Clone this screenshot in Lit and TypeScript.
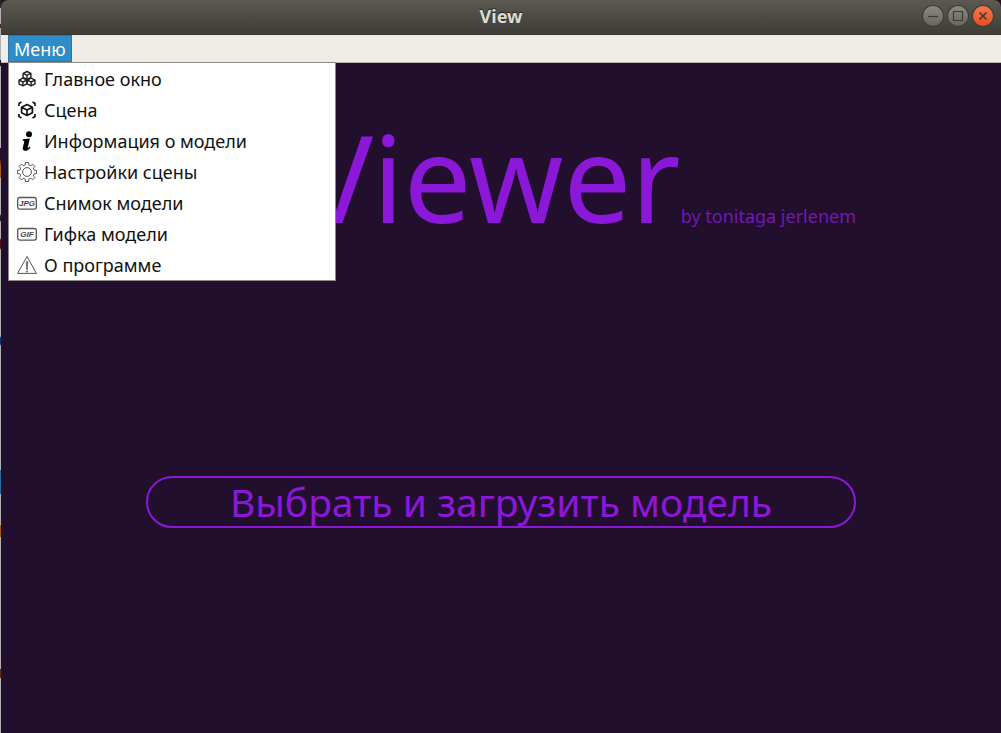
import { LitElement, html, svg, css, nothing } from "lit";
import { customElement, state } from "lit/decorators.js";

const cube = (x: number, y: number, r: number) => {
  const h = r / 2;
  return svg`<path d="M${x} ${y - r}L${x + r} ${y - h}V${y + h}L${x} ${y + r}L${x - r} ${y + h}V${y - h}ZM${x - r} ${y - h}L${x} ${y}L${x + r} ${y - h}M${x} ${y}V${y + r}"/>`;
};

const badge = (label: string) => svg`
  <rect x="0.7" y="4.5" width="18.6" height="11.6" rx="2" stroke="#555" stroke-width="1.3"/>
  <text x="10" y="13" text-anchor="middle" class="badge">${label}</text>`;

const gear = () => {
  const points: string[] = [];
  for (let i = 0; i < 8; i++) {
    const steps: [number, number][] = [[-13, 7.4], [-10, 9.7], [10, 9.7], [13, 7.4]];
    for (const [offset, radius] of steps) {
      const angle = ((i * 45 + offset) * Math.PI) / 180;
      points.push(`${(10 + radius * Math.sin(angle)).toFixed(2)},${(10 - radius * Math.cos(angle)).toFixed(2)}`);
    }
  }
  return svg`<polygon points=${points.join(" ")} stroke="#555" stroke-width="1" stroke-linejoin="round"/>
    <circle cx="10" cy="10" r="4.4" stroke="#555" stroke-width="1"/>`;
};

const items = [
  { label: "Главное окно", icon: svg`<g stroke="#222" stroke-width="1.4" stroke-linejoin="round">${cube(10, 6.4, 3.9)}${cube(5.9, 13, 3.9)}${cube(14.1, 13, 3.9)}</g>` },
  { label: "Сцена", icon: svg`<g stroke="#111" stroke-width="1.7" stroke-linejoin="round">${cube(10, 10, 5.4)}<path d="M2 6V3.5L4.5 2M15.5 2L18 3.5V6M18 14V16.5L15.5 18M4.5 18L2 16.5V14"/></g>` },
  { label: "Информация о модели", icon: svg`<circle cx="12" cy="3.2" r="3" fill="#000"/><path fill="#000" d="M5.6 9.4L6 8.2L12.9 7.4L10.9 15.6Q10.7 17 11.4 16.8L13 15.6L13.4 16.4Q11.2 19.8 8 19.8Q5.2 19.6 5.8 16.6L7.3 10.8Q7.4 9.5 5.6 9.4Z"/>` },
  { label: "Настройки сцены", icon: gear() },
  { label: "Снимок модели", icon: badge("JPG") },
  { label: "Гифка модели", icon: badge("GIF") },
  { label: "О программе", icon: svg`<path d="M10 1.5L19.4 18.4H0.6Z" stroke="#555" stroke-width="1" stroke-linejoin="round"/><path d="M9.3 6.5h1.4l-.3 8.2h-.8Z" fill="#444" stroke="#555" stroke-width="0.5"/><circle cx="10" cy="16.5" r="0.9" fill="#555"/>` },
];

@customElement("app-root")
export class AppRoot extends LitElement {
  @state() private open = true;

  static styles = css`
    :host {
      display: flex;
      flex-direction: column;
      min-height: 100vh;
      box-sizing: border-box;
      padding-left: 1px;
      background:
        linear-gradient(
          #2b2a27 8px, #b0b0b0 8px 24px, #5a2a10 24px 28px, #b0b0b0 28px 60px,
          #220e2d 60px 66px, #b0b0b0 66px 148px, #220e2d 148px 158px,
          #a85a18 166px 178px, #b0b0b0 178px 214px, #201830 216px 220px,
          #b0b0b0 222px 238px, #5a1010 240px 248px, #b0b0b0 250px 336px,
          #0c3478 338px 344px, #b0b0b0 346px 470px, #1c6ca6 470px 494px,
          #b0b0b0 494px 525px, #a8540c 525px 537px, #b0b0b0 537px 669px,
          #6a2a08 669px 678px, #b0b0b0 678px
        ) left top / 1px 100% no-repeat,
        #220e2d;
      font-family: "Noto Sans", "Open Sans", sans-serif;
    }
    button {
      font: inherit;
      margin: 0;
      padding: 0;
      border: 0;
      background: none;
      cursor: pointer;
    }
    .titlebar {
      display: grid;
      grid-template-columns: 1fr auto 1fr;
      align-items: center;
      height: 35px;
      box-sizing: border-box;
      padding: 0 8px 2px;
      border-bottom: 1px solid #353430;
      border-radius: 7px 7px 0 0;
      background: linear-gradient(#5b5950, #3e3d38);
      color: #dfdbd2;
    }
    .caption {
      grid-column: 2;
      margin: 0;
      font-size: 18px;
      line-height: 24px;
      font-weight: 700;
      text-shadow: 0 -1px 1px #222;
    }
    .controls {
      display: flex;
      justify-content: flex-end;
      gap: 5px;
    }
    .control {
      display: flex;
      width: 20px;
      height: 20px;
      border-radius: 50%;
      background: linear-gradient(#8b8981, #65645e);
      box-shadow: 0 0 0 1px #3c3b37;
    }
    .control.close {
      background: linear-gradient(#f6774f, #e4501f);
    }
    .control svg {
      width: 20px;
      height: 20px;
      fill: none;
      stroke: #3c3b36;
      stroke-width: 1.2;
    }
    .menubar {
      position: relative;
      display: flex;
      height: 28px;
      box-sizing: border-box;
      padding: 0 7px;
      border-bottom: 1px solid #b9b5ae;
      background: #efebe7;
    }
    .menu-button {
      padding: 0 5px;
      border: 1px solid #2a76a9;
      background: #308cc6;
      color: #fff;
      font-size: 18px;
      line-height: 24px;
    }
    .menu {
      position: absolute;
      top: 100%;
      left: 7px;
      z-index: 1;
      width: 328px;
      box-sizing: border-box;
      margin: 0;
      padding: 0;
      border: 1px solid #8f8c88;
      background: #fff;
      list-style: none;
    }
    .item {
      display: flex;
      align-items: center;
      gap: 7px;
      width: 100%;
      height: 31px;
      padding: 0 8px;
      color: #111;
      font-size: 18px;
      text-align: left;
    }
    .item:hover {
      background: #e3eef6;
    }
    .icon {
      flex: none;
      width: 20px;
      height: 20px;
      fill: none;
    }
    .badge {
      fill: #444;
      font: italic 700 8px "Liberation Sans", sans-serif;
    }
    main {
      flex: 1;
      display: flex;
      flex-direction: column;
      padding: 34px 145px;
      color: #8b18d9;
    }
    .brand {
      display: flex;
      justify-content: flex-end;
      align-items: baseline;
      white-space: nowrap;
    }
    .name {
      margin: 0;
      font-size: 120px;
      line-height: 160px;
      font-weight: 400;
    }
    .authors {
      margin: 0;
      color: #7219b4;
      font-size: 18px;
    }
    .load {
      height: 52px;
      margin-top: 219px;
      border: 2px solid #8b18d9;
      border-radius: 26px;
      color: #8b18d9;
      font-size: 39px;
      line-height: 46px;
    }
  `;

  render() {
    return html`
      <header class="titlebar">
        <h1 class="caption">View</h1>
        <div class="controls">
          <button class="control" aria-label="Свернуть"><svg viewBox="0 0 20 20"><path d="M5 10.5H15" /></svg></button>
          <button class="control" aria-label="Развернуть"><svg viewBox="0 0 20 20"><path d="M5.5 5.5H14.5V14.5H5.5Z" /></svg></button>
          <button class="control close" aria-label="Закрыть"><svg viewBox="0 0 20 20"><path stroke-width="1.6" d="M6.5 6.5L13.5 13.5M13.5 6.5L6.5 13.5" /></svg></button>
        </div>
      </header>
      <nav class="menubar">
        <button class="menu-button" aria-expanded=${this.open} @click=${() => (this.open = !this.open)}>Меню</button>
        ${this.open
          ? html`<ul class="menu">
              ${items.map(
                (item) => html`<li>
                  <button class="item" @click=${() => (this.open = false)}>
                    <svg class="icon" viewBox="0 0 20 20" aria-hidden="true">${item.icon}</svg>${item.label}
                  </button>
                </li>`
              )}
            </ul>`
          : nothing}
      </nav>
      <main>
        <div class="brand">
          <h2 class="name">Viewer</h2>
          <p class="authors">by tonitaga jerlenem</p>
        </div>
        <button class="load">Выбрать и загрузить модель</button>
      </main>
    `;
  }
}
